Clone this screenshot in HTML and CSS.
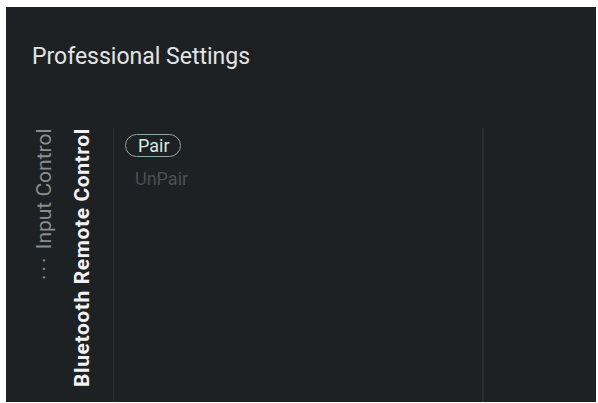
FILE: index.html
```html
<!DOCTYPE html>
<html>
<head>
<meta charset="utf-8">
<link rel="stylesheet" href="styles.css">
</head>
<body>
<div class="screen">
  <div class="title">Professional Settings</div>
  <div class="content">
    <div class="nav">
      <div class="vcol crumb"><span class="dots">···</span> Input Control</div>
      <div class="vcol current">Bluetooth Remote Control</div>
    </div>
    <div class="items">
      <div class="item selected">Pair</div>
      <div class="item disabled">UnPair</div>
    </div>
    <div class="side"></div>
  </div>
</div>
</body>
</html>
```

FILE: styles.css
```css
* { box-sizing: border-box; }
html, body { margin: 0; padding: 0; background: #ffffff; }
body { width: 598px; height: 403px; overflow: hidden; font-family: Roboto, "Liberation Sans", sans-serif; }
.screen {
  margin: 7px 0 0 6px;
  width: 590px;
  height: 395px;
  background: #1e2124;
  display: flex;
  flex-direction: column;
}
.title {
  color: #e2e4e4;
  font-size: 23px;
  line-height: 27px;
  padding: 36px 0 0 26px;
  height: 121px;
}
.content {
  flex: 1;
  display: flex;
}
.nav {
  width: 108px;
  display: flex;
  border-right: 1px solid #2b2e31;
  padding-left: 26px;
}
.vcol {
  writing-mode: vertical-rl;
  transform: rotate(180deg);
  text-align: right;
  white-space: nowrap;
}
.crumb {
  color: #8a8d8f;
  font-size: 21px;
  width: 24px;
  padding-top: 7px;
}
.dots { letter-spacing: 3px; color: #8a8d8f; margin-right: 2px; }
.current {
  color: #f2f2f2;
  font-size: 21px;
  font-weight: bold;
  letter-spacing: 0.6px;
  width: 25px;
  margin-left: 14px;
  padding-top: 7px;
}
.items {
  width: 370px;
  border-right: 2px solid #2c2f32;
  padding: 6px 0 0 11px;
  display: flex;
  flex-direction: column;
  align-items: flex-start;
  gap: 12px;
}
.item {
  font-size: 18px;
  line-height: 20px;
  padding: 0 10px;
}
.selected {
  color: #d3ebe2;
  border: 1.5px solid #86aa9c;
  border-radius: 12px;
  padding: 1px 10px 0 12px;
}
.disabled {
  color: #4b4e51;
  padding-left: 10px;
}
.side { flex: 1; }
```
